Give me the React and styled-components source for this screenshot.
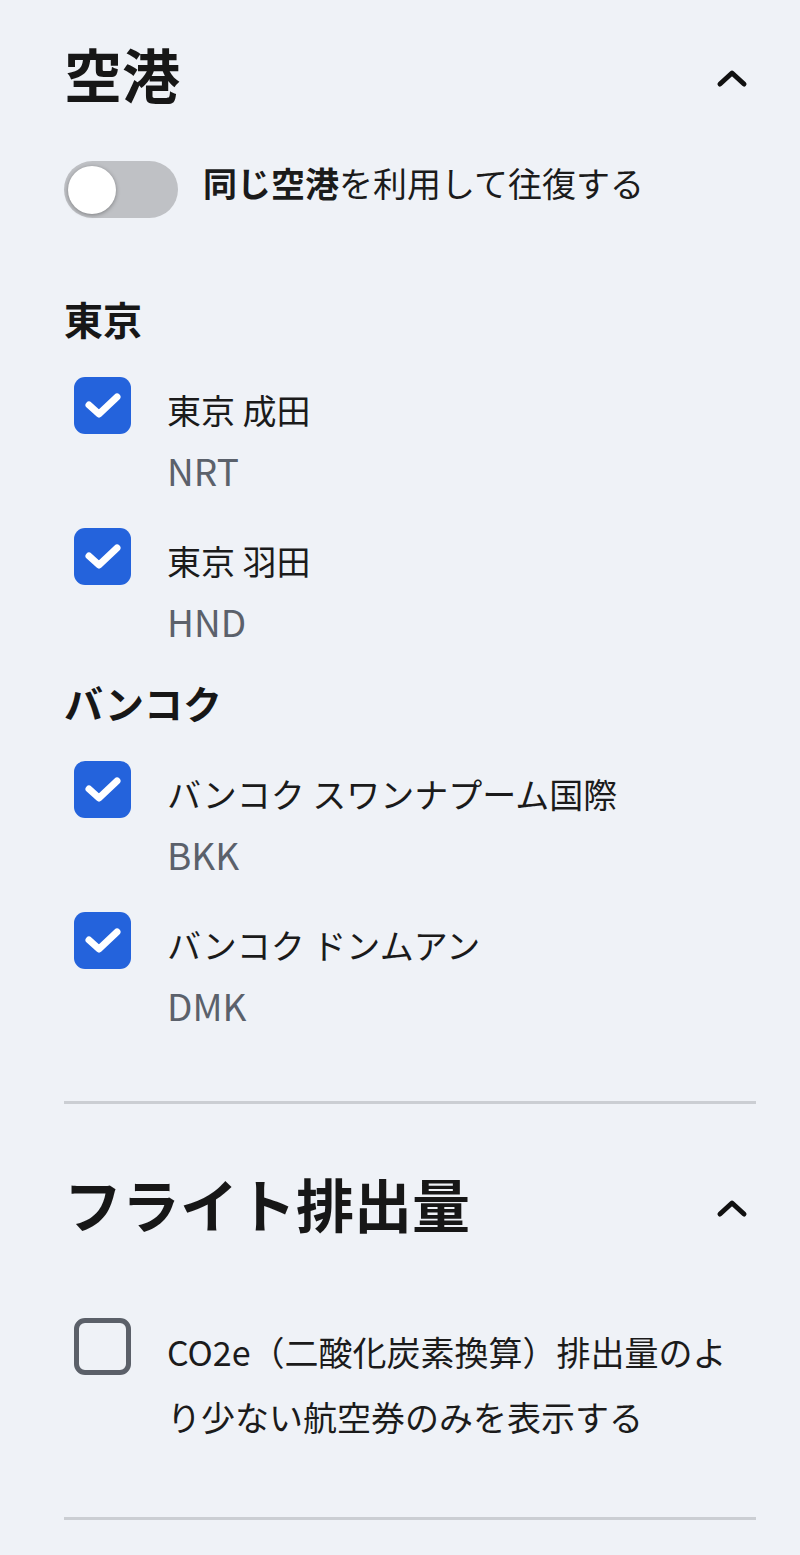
import React from 'react';
import styled, { createGlobalStyle } from 'styled-components';

const GlobalStyle = createGlobalStyle`
  body {
    margin: 0;
    background: #eff2f7;
    font-family: "Noto Sans CJK JP", "Noto Sans", sans-serif;
    color: #171717;
  }
`;

const airportGroups = [
  {
    city: '東京',
    airports: [
      { name: '東京 成田', code: 'NRT' },
      { name: '東京 羽田', code: 'HND' },
    ],
  },
  {
    city: 'バンコク',
    airports: [
      { name: 'バンコク スワンナプーム国際', code: 'BKK' },
      { name: 'バンコク ドンムアン', code: 'DMK' },
    ],
  },
];

const Chevron = () => (
  <svg width="32" height="20" viewBox="0 0 32 20">
    <polyline points="4,16 16,5 28,16" fill="none" stroke="#111" strokeWidth="5" strokeLinecap="round" strokeLinejoin="round" />
  </svg>
);

const Checkbox = ({ checked }) => (
  <Box checked={checked}>
    {checked && (
      <svg width="57" height="57" viewBox="0 0 57 57">
        <polyline points="15,28 25,37 43,20" fill="none" stroke="#fff" strokeWidth="7" strokeLinecap="round" strokeLinejoin="round" />
      </svg>
    )}
  </Box>
);

const App = () => {
  return (
    <Page>
      <GlobalStyle />
      <Section top="41px" bottom="65px">
        <Header>
          <Title>空港</Title>
          <Chevron />
        </Header>
        <ToggleRow>
          <Toggle>
            <Knob />
          </Toggle>
          <ToggleLabel><b>同じ空港</b>を利用して往復する</ToggleLabel>
        </ToggleRow>
        {airportGroups.map((group, i) => (
          <Group key={group.city} first={i === 0}>
            <GroupTitle>{group.city}</GroupTitle>
            <List>
              {group.airports.map((a) => (
                <Item key={a.code}>
                  <Checkbox checked />
                  <ItemText>
                    <Name>{a.name}</Name>
                    <Code>{a.code}</Code>
                  </ItemText>
                </Item>
              ))}
            </List>
          </Group>
        ))}
      </Section>
      <Divider />
      <Section top="67px" bottom="68px">
        <Header>
          <Title>フライト排出量</Title>
          <Chevron />
        </Header>
        <Item wide>
          <Checkbox />
          <Emission>CO2e（二酸化炭素換算）排出量のより少ない航空券のみを表示する</Emission>
        </Item>
      </Section>
      <Divider />
    </Page>
  );
};

export default App;

const Page = styled.div`
  width: 800px;
  height: 1555px;
  box-sizing: border-box;
  padding: 0 44px 0 64px;
  overflow: hidden;
`;

const Section = styled.div`
  display: flex;
  flex-direction: column;
  padding-top: ${(p) => p.top};
  padding-bottom: ${(p) => p.bottom};
`;

const Header = styled.div`
  display: flex;
  align-items: center;
  justify-content: space-between;
  padding-right: 8px;
  height: 64px;
  svg {
    margin-top: 10px;
  }
`;

const Title = styled.h2`
  margin: 0;
  font-size: 58px;
  line-height: 64px;
  font-weight: 700;
  color: #171717;
`;

const ToggleRow = styled.div`
  display: flex;
  align-items: center;
  gap: 25px;
  margin-top: 56px;
`;

const Toggle = styled.div`
  width: 114px;
  height: 57px;
  border-radius: 29px;
  background: #bfc1c5;
  display: flex;
  align-items: center;
  padding: 0 4px;
  box-sizing: border-box;
`;

const Knob = styled.div`
  width: 48px;
  height: 48px;
  border-radius: 50%;
  background: #fff;
  box-shadow: 0 1px 4px rgba(0, 0, 0, 0.35);
`;

const ToggleLabel = styled.span`
  font-size: 34px;
  line-height: 36px;
  margin-bottom: 14px;
  color: #1b1b1b;
  b {
    font-weight: 700;
  }
`;

const Group = styled.div`
  margin-top: ${(p) => (p.first ? '78px' : '28px')};
`;

const GroupTitle = styled.h3`
  margin: 0 0 37px;
  font-size: 39px;
  line-height: 44px;
  font-weight: 700;
`;

const List = styled.div`
  display: flex;
  flex-direction: column;
  gap: 27px;
`;

const Item = styled.div`
  display: flex;
  align-items: flex-start;
  gap: 36px;
  padding-left: 10px;
  margin-top: ${(p) => (p.wide ? '83px' : '0')};
`;

const Box = styled.div`
  flex: none;
  width: 57px;
  height: 57px;
  box-sizing: border-box;
  border-radius: 11px;
  background: ${(p) => (p.checked ? '#2463dc' : 'transparent')};
  border: ${(p) => (p.checked ? 'none' : '5px solid #5b6069')};
  display: flex;
  align-items: center;
  justify-content: center;
`;

const ItemText = styled.div`
  display: flex;
  flex-direction: column;
  padding-top: 2px;
`;

const Name = styled.span`
  font-size: 34px;
  line-height: 61px;
  color: #1b1b1b;
`;

const Code = styled.span`
  font-size: 37px;
  line-height: 61px;
  color: #5b616b;
`;

const Emission = styled.span`
  font-size: 34px;
  line-height: 65px;
  color: #1b1b1b;
  padding-top: 1px;
  flex: 1;
`;

const Divider = styled.hr`
  margin: 0;
  border: none;
  height: 3px;
  background: #cbced3;
`;
